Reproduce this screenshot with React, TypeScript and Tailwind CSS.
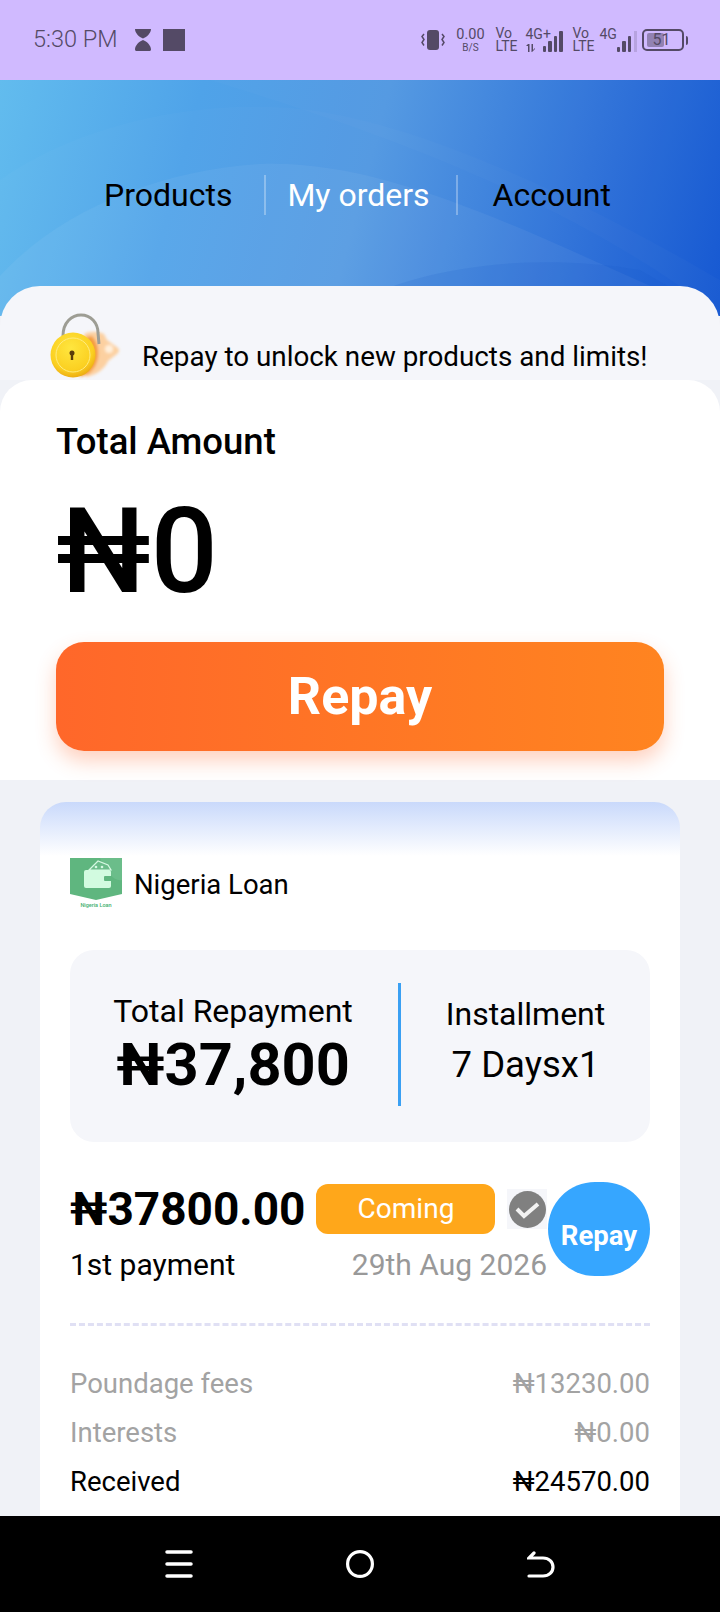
const Bars = ({ heights }: { heights: number[] }) => (
  <div className="flex items-end gap-[2px]">
    {heights.map((h, i) => (
      <div key={i} className="w-[3.5px] rounded-[1px] bg-[#544a66]" style={{ height: h }} />
    ))}
  </div>
);

const Volte = () => (
  <div className="flex w-[22px] flex-col text-[14px] leading-[13px] text-[#544a66]">
    <span>Vo</span>
    <span>LTE</span>
  </div>
);

const StatusBar = () => (
  <div className="flex h-[80px] shrink-0 items-center bg-[#d0baff] pl-[33px] pr-[32px] text-[#544a66]">
    <span className="text-[23.500px] font-light leading-none">5:30 PM</span>
    <svg className="ml-[16px]" width="18" height="22" viewBox="0 0 18 22" fill="#544a66">
      <path d="M1 0h16c0 4-4 8-8 9.500C5 8 1 4 1 0zM9 11c4 1.500 8 5.500 8 9.500 0 1-1 1.500-2 1.500H3c-1 0-2-.5-2-1.500C1 16.500 5 12.500 9 11z" />
    </svg>
    <div className="ml-[11px] h-[22px] w-[22px] bg-[#544a66]" />
    <div className="ml-auto flex items-center">
      <svg width="26" height="20" viewBox="0 0 26 20" fill="none">
        <rect x="7" y="0" width="12" height="20" rx="3" fill="#544a66" />
        <path d="M4 4 2 6.500l2 3-2 3 2 3M22 4l2 2.500-2 3 2 3-2 3" stroke="#544a66" strokeWidth="1.500" />
      </svg>
      <div className="ml-[11px] flex w-[28px] flex-col items-center text-[#544a66]">
        <span className="text-[14.500px] leading-[14px]">0.00</span>
        <span className="text-[10px] leading-[11px]">B/S</span>
      </div>
      <div className="ml-[11px]">
        <Volte />
      </div>
      <div className="ml-[8px] flex h-[24px] w-[37px] flex-col justify-between">
        <span className="text-[14px] leading-[13px]">4G+</span>
        <div className="flex h-[8px] items-center">
          <svg width="9" height="8" viewBox="0 0 9 8" fill="#544a66">
            <path d="M2 0h1.500v8H2zM0 2l2-2v2zM5.500 0H7v6l2-2v1l-3 3h-.500z" />
          </svg>
        </div>
      </div>
      <div className="-ml-[20px] flex h-[24px] items-end">
        <Bars heights={[6, 11, 16, 21]} />
      </div>
      <div className="ml-[10px]">
        <Volte />
      </div>
      <div className="ml-[5px] flex h-[24px] w-[17px] items-start text-[14px] leading-[13px]">4G</div>
      <div className="flex h-[24px] items-end">
        <Bars heights={[5, 11, 16]} />
        <div className="ml-[3px] h-[21px] w-[3px] bg-[#544a66]/20" />
      </div>
      <div className="relative ml-[5px] flex h-[22px] w-[42px] items-center rounded-[5px] border-2 border-[#544a66] pl-[3px]">
        <div className="h-[14px] w-[17px] rounded-[2px] bg-[#544a66]/50" />
        <span className="absolute inset-0 flex items-center justify-center pr-[3px] text-[16px] leading-none">51</span>
      </div>
      <div className="ml-[2px] h-[9px] w-[2px] rounded-r bg-[#544a66]" />
    </div>
  </div>
);

const Header = () => (
  <div className="relative h-[236px] shrink-0 overflow-hidden bg-[linear-gradient(105deg,#62bcee_0%,#4fa3e9_26%,#5298e2_50%,#2e72d9_78%,#1255d2_100%)]">
    <svg className="absolute inset-0" width="720" height="236" viewBox="0 0 720 236" fill="none">
      <path d="M0 100C70 50 180 20 290 28 420 38 600 130 720 200V236H0z" fill="#ffffff" fillOpacity="0.02" />
      <path d="M0 196C60 130 160 90 260 84 400 78 560 170 720 236H0z" fill="#ffffff" fillOpacity="0.05" />
      <path d="M210 0C340 40 560 110 720 236V0z" fill="#ffffff" fillOpacity="0.02" />
      <path d="M330 236C400 190 520 170 640 190L720 236z" fill="#0d4fc8" fillOpacity="0.12" />
    </svg>
    <div className="relative flex items-center pl-[104px] pt-[95px] text-[32px] leading-[40px]">
      <span className="text-black">Products</span>
      <div className="ml-[32px] h-[40px] w-[2px] bg-white/30" />
      <span className="ml-[21px] text-white">My orders</span>
      <div className="ml-[26px] h-[40px] w-[2px] bg-white/30" />
      <span className="ml-[35px] text-black">Account</span>
    </div>
  </div>
);

const LockIcon = () => (
  <svg width="74" height="68" viewBox="0 0 74 68" fill="none">
    <defs>
      <radialGradient id="lockGold" cx="0.45" cy="0.35" r="0.7">
        <stop offset="0" stopColor="#ffe63f" />
        <stop offset="0.7" stopColor="#fbd021" />
        <stop offset="1" stopColor="#e8a20e" />
      </radialGradient>
      <filter id="lockBlur" x="-20%" y="-20%" width="140%" height="140%">
        <feGaussianBlur stdDeviation="1.500" />
      </filter>
    </defs>
    <g filter="url(#lockBlur)">
      <path d="M34 22c6-3 14-3 20 0l3 6 11 8c2 2 1 4-1 6l-9 7c-3 8-12 14-22 16z" fill="#fcd0a0" />
      <path d="M42 24c8 8 10 28-4 38l-8 3 6-40z" fill="#f59f40" />
      <circle cx="59" cy="37" r="4" fill="#fff0dc" />
    </g>
    <path d="M13 24C13 10 22 3 31 3c10 0 17 8 17 18l1 11" stroke="#9d9d94" strokeWidth="3" />
    <circle cx="23" cy="43" r="22.500" fill="url(#lockGold)" />
    <circle cx="23" cy="43" r="17" stroke="#ffec80" strokeWidth="1" />
    <circle cx="22" cy="41" r="2.500" fill="#5b3c0a" />
    <rect x="20.800" y="41" width="2.400" height="7" fill="#5b3c0a" />
  </svg>
);

const Logo = () => (
  <div className="flex w-[52px] flex-col items-center">
    <svg width="52" height="43" viewBox="0 0 52 43" fill="none">
      <path d="M0 0h52v36l-26 6-26-6z" fill="#5fb67f" />
      <path d="M30 0h22v22C44 24 36 14 30 0z" fill="#6bbd8a" />
      <path d="M19 12l9-9 10 4 3 5z" fill="#6bbd8a" stroke="#d6f8e2" strokeWidth="1.200" />
      <circle cx="26" cy="9" r="1.300" fill="#d6f8e2" />
      <circle cx="32" cy="9" r="1.300" fill="#d6f8e2" />
      <rect x="14" y="12" width="27" height="18" rx="2" fill="#d2fbe0" />
      <rect x="34" y="18" width="8" height="5" rx="1" fill="#5fb67f" />
    </svg>
    <span className="mt-[1px] whitespace-nowrap text-[5.500px] font-medium leading-[7px] text-[#45b06f]">Nigeria Loan</span>
  </div>
);

const FeeRow = ({ label, value, dark }: { label: string; value: string; dark?: boolean }) => (
  <div className={`flex h-[49px] items-center justify-between text-[27.500px] ${dark ? 'text-black' : 'text-[#a3a3a3]'}`}>
    <span>{label}</span>
    <span>{value}</span>
  </div>
);

const LoanCard = () => (
  <div className="mx-[40px] mt-[22px] flex-1 rounded-t-[26px] bg-white bg-[linear-gradient(180deg,#c9d9fb_0px,#ffffff_54px)] px-[30px] pt-[56px]">
    <div className="flex items-center">
      <Logo />
      <span className="ml-[12px] mt-[2px] text-[27.500px] leading-none text-black">Nigeria Loan</span>
    </div>

    <div className="mt-[41px] flex h-[192px] items-center rounded-[24px] bg-[#f5f6fa]">
      <div className="mr-[2px] flex w-[326px] flex-col items-center text-black">
        <span className="text-[32px] leading-[36px]">Total Repayment</span>
        <span className="mt-[2px] text-[59.500px] font-bold leading-[68px]">₦37,800</span>
      </div>
      <div className="mb-[4px] h-[123px] w-[3px] bg-[#3aa0f3]" />
      <div className="flex flex-1 flex-col items-center pb-[11px] text-black">
        <span className="text-[32px] leading-[36px]">Installment</span>
        <span className="mt-[13px] text-[36.500px] leading-[40px]">7 Daysx1</span>
      </div>
    </div>

    <div className="relative mt-[41px]">
      <div className="flex items-center">
        <span className="text-[46px] font-bold leading-[52px] text-black">₦37800.00</span>
        <div className="ml-[11px] flex h-[50px] w-[179px] items-center justify-center rounded-[12px] bg-[#ffa71a] text-[28px] text-white">
          Coming
        </div>
        <div className="ml-[12px] flex h-[40px] w-[40px] items-center justify-center bg-[#f5f6fa]">
          <svg width="37" height="37" viewBox="0 0 37 37" fill="none">
            <circle cx="18.500" cy="18.500" r="18.500" fill="#808080" />
            <path d="M8 18l7 7 14-12" stroke="#f2f2f2" strokeWidth="4" />
          </svg>
        </div>
      </div>
      <div className="mt-[10px] flex w-[477px] items-center justify-between">
        <span className="text-[30px] leading-[40px] text-black">1st payment</span>
        <span className="text-[30px] leading-[40px] text-[#999999]">29th Aug 2026</span>
      </div>
      <div className="absolute right-0 top-[-1px] flex h-[94px] w-[102px] items-center justify-center rounded-full bg-[#36a6ff] pt-[13px] text-[27.500px] font-bold text-white">
        Repay
      </div>
    </div>

    <div className="mt-[38px] border-t-[3px] border-dashed border-[#e0e0f4]" />

    <div className="mt-[33px]">
      <FeeRow label="Poundage fees" value="₦13230.00" />
      <FeeRow label="Interests" value="₦0.00" />
      <FeeRow label="Received" value="₦24570.00" dark />
    </div>
  </div>
);

const NavBar = () => (
  <div className="flex h-[96px] shrink-0 items-center justify-center bg-black">
    <div className="flex items-center gap-[153px]">
      <svg width="28" height="28" viewBox="0 0 28 28" fill="none" stroke="#ffffff" strokeWidth="3.500" strokeLinecap="round">
        <path d="M2 2h24M2 14h24M2 26h24" />
      </svg>
      <svg width="28" height="28" viewBox="0 0 28 28" fill="none" stroke="#ffffff" strokeWidth="3.200">
        <circle cx="14" cy="14" r="12.400" />
      </svg>
      <svg width="28" height="28" viewBox="0 0 28 28" fill="none" stroke="#ffffff" strokeWidth="3.200" strokeLinecap="round">
        <path d="M2 26h14c6 0 10-4 10-9s-4-9-10-9H2l5-5" />
      </svg>
    </div>
  </div>
);

export default function App() {
  return (
    <div className="flex h-[1612px] w-[720px] flex-col overflow-hidden bg-[#f0f2f7] font-['Roboto',sans-serif]">
      <StatusBar />
      <Header />
      <div className="-mt-[30px] flex min-h-0 flex-1 flex-col overflow-hidden">
        <div className="relative rounded-t-[40px] bg-[#f5f6fa]">
          <div className="flex h-[94px] items-end pl-[50px]">
            <LockIcon />
            <span className="mb-[3px] ml-[18px] text-[27.800px] leading-[40px] text-black">
              Repay to unlock new products and limits!
            </span>
          </div>
        </div>
        <div className="relative h-[400px] shrink-0 rounded-t-[32px] bg-white px-[56px]">
          <div className="pt-[41px] text-[36.500px] font-medium leading-[42px] text-black">Total Amount</div>
          <div className="mt-[29px] text-[118px] font-medium leading-[120px] text-black">₦0</div>
          <div className="mt-[30px] flex h-[109px] items-center justify-center rounded-[28px] bg-[linear-gradient(90deg,#ff672a,#ff8420)] text-[52px] font-bold text-white shadow-[0_10px_20px_rgba(255,103,42,0.3)]">
            Repay
          </div>
        </div>
        <LoanCard />
      </div>
      <NavBar />
    </div>
  );
}
